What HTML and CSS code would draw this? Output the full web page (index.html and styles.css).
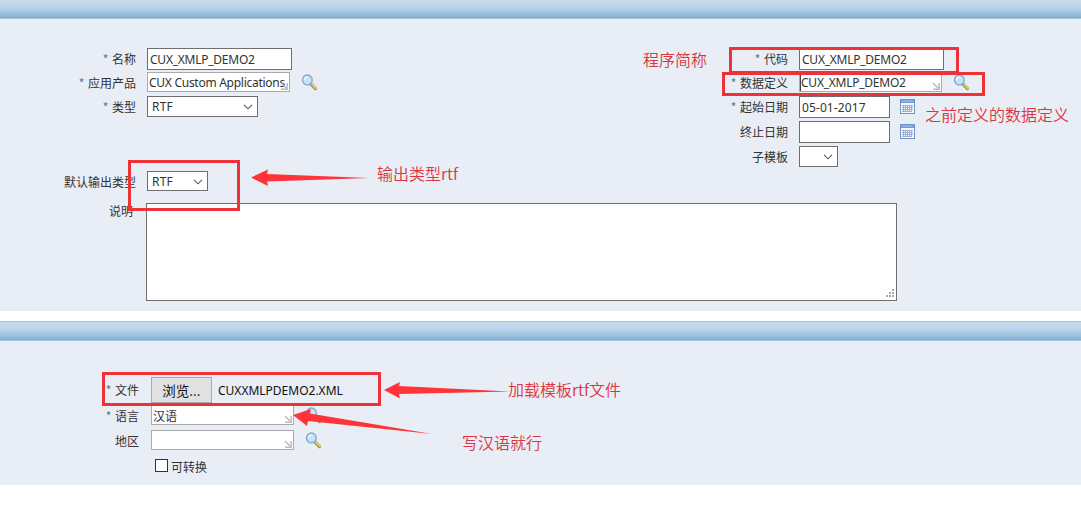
FILE: index.html
```html
<!DOCTYPE html>
<html lang="zh-CN">
<head>
<meta charset="utf-8">
<title>模板</title>
<link rel="stylesheet" href="styles.css">
</head>
<body>
<svg class="defs" width="0" height="0" aria-hidden="true">
  <defs>
    <symbol id="lens" viewBox="0 0 16 16">
      <path d="M9.300 9.300 13.600 13.700" stroke="#a09a50" stroke-width="3.200" stroke-linecap="round"/>
      <path d="M10.300 9.600 14 13.200" stroke="#e0d168" stroke-width="1.700" stroke-linecap="round"/>
      <circle cx="6" cy="5.600" r="4.600" fill="#c3e3fa" stroke="#8aa5cb" stroke-width="1.300"/>
      <path d="M3.400 5.500Q3.700 3 6.200 2.900" fill="none" stroke="#f4fbff" stroke-width="1.300"/>
    </symbol>
    <symbol id="calendar" viewBox="0 0 15 15">
      <rect x=".5" y=".5" width="14" height="14" fill="#f4f8ff" stroke="#6f94cc"/>
      <path d="M1 1h13v3H1z" fill="#6c9be0"/>
      <path d="M2 2h11" stroke="#a9c8f2"/>
      <path d="M2 6.500h11M2 8.500h11M2 10.500h11M2 12.500h9M3.500 6v7M5.500 6v7M7.500 6v7M9.500 6v7M11.500 6v7" stroke="#97a9c4" stroke-width=".9"/>
    </symbol>
    <symbol id="chevron" viewBox="0 0 10 6">
      <path d="M1 .8 5 4.800 9 .8" fill="none" stroke="#585858" stroke-width="1.100"/>
    </symbol>
    <symbol id="corner" viewBox="0 0 8 8">
      <path d="M1 1 6 6M7.200 1v6.200H1" fill="none" stroke="#bcbcbc" stroke-width="1.500"/>
    </symbol>
  </defs>
</svg>

<section class="panel general">
  <header class="bar"></header>
  <div class="columns">
    <div class="column left">
      <div class="row name"><label><i>*</i> 名称</label><div class="box text">CUX_XMLP_DEMO2</div></div>
      <div class="row app"><label><i>*</i> 应用产品</label><div class="box lov"><span class="clip">CUX Custom Applications</span><svg class="corner"><use href="#corner"/></svg></div><svg class="lens"><use href="#lens"/></svg></div>
      <div class="row type"><label><i>*</i> 类型</label><div class="box select wide">RTF<svg class="chevron"><use href="#chevron"/></svg></div></div>
      <div class="row output"><label>默认输出类型</label><div class="box select medium">RTF<svg class="chevron"><use href="#chevron"/></svg></div></div>
    </div>
    <div class="column right">
      <div class="row name"><label><i>*</i> 代码</label><div class="box text">CUX_XMLP_DEMO2</div></div>
      <div class="row app"><label><i>*</i> 数据定义</label><div class="box lov caret">CUX_XMLP_DEMO2<svg class="corner"><use href="#corner"/></svg></div><svg class="lens"><use href="#lens"/></svg></div>
      <div class="row start"><label><i>*</i> 起始日期</label><div class="box date">05-01-2017</div><svg class="calendar"><use href="#calendar"/></svg></div>
      <div class="row end"><label>终止日期</label><div class="box date"></div><svg class="calendar"><use href="#calendar"/></svg></div>
      <div class="row sub"><label>子模板</label><div class="box select small"><svg class="chevron"><use href="#chevron"/></svg></div></div>
    </div>
  </div>
  <div class="row description"><label>说明</label><div class="area"><svg class="grip" viewBox="0 0 10 9"><path d="M8 0h2v2H8zM5 3h2v2H5zM8 3h2v2H8zM2 6h2v2H2zM5 6h2v2H5zM8 6h2v2H8z" fill="#aaa"/></svg></div></div>
</section>

<section class="panel upload">
  <header class="bar"></header>
  <div class="row file"><label><i>*</i> 文件</label><div class="browse">浏览...</div><span class="filename">CUXXMLPDEMO2.XML</span></div>
  <div class="row language"><label><i>*</i> 语言</label><div class="box lov"><span class="cjk">汉语</span><svg class="corner"><use href="#corner"/></svg></div><svg class="lens"><use href="#lens"/></svg></div>
  <div class="row region"><label>地区</label><div class="box lov"><svg class="corner"><use href="#corner"/></svg></div><svg class="lens"><use href="#lens"/></svg></div>
  <div class="row convert"><span class="check"></span><span class="checktext">可转换</span></div>
</section>

<div class="mark mark-code"></div>
<div class="mark mark-data"></div>
<div class="mark mark-output"></div>
<div class="mark mark-file"></div>
<svg class="arrows" width="1081" height="510" viewBox="0 0 1081 510">
  <g fill="#ff3338">
    <path d="M251 177.500 268 169.500 267 174 369 178 267 181.500 268 186Z"/>
    <path d="M384 390 400 382 399 386 510 391.500 399 394 400 398.500Z"/>
    <path d="M293 415 311 409 310 413.500 432 434 308 421 307 426Z"/>
  </g>
</svg>
<div class="note note-code">程序简称</div>
<div class="note note-data">之前定义的数据定义</div>
<div class="note note-output">输出类型rtf</div>
<div class="note note-file">加载模板rtf文件</div>
<div class="note note-language">写汉语就行</div>
</body>
</html>
```

FILE: styles.css
```css
* { box-sizing: border-box; }
body {
  position: relative;
  margin: 0;
  width: 1081px;
  height: 510px;
  overflow: hidden;
  background: #fff;
  color: #333;
  font: 12px/16px "Noto Sans", "Noto Sans CJK SC", sans-serif;
}
.defs { position: absolute; }
svg { display: block; flex: none; }
.panel { background: #e9edf5; overflow: hidden; }
.general { height: 311px; margin-bottom: 10px; border-bottom: 5px solid #e6eff6; }
.upload { height: 164px; }
.bar {
  height: 19px;
  background: linear-gradient(#c7dced, #b6d2e9 45%, #8fb8da 88%, #85a9cb);
  border-bottom: 1px solid #a9c5de;
}
.upload .bar { height: 20px; border-top: 1px solid #a9bfd1; }
.columns { display: flex; height: 184px; }
.column { width: 652px; padding-top: 29px; }
.right { width: 429px; }
.row { display: flex; align-items: flex-start; }
.row label {
  width: 136px;
  margin: 3px 11px 0 0;
  flex: none;
  text-align: right;
  white-space: nowrap;
  font-family: "Noto Sans CJK SC", sans-serif;
}
.row i { color: #5b6f91; font-style: normal; margin-right: 1px; }
.box {
  display: flex;
  position: relative;
  flex: none;
  border: 1px solid #6e6e6e;
  background: #fff;
  white-space: nowrap;
  letter-spacing: -.24px;
}
.name { height: 24px; }
.text { width: 145px; height: 22px; padding: 3px 2px; }
.app { height: 24px; }
.lov { width: 143px; height: 20px; padding: 2px 1px; border-color: #aaa; }
.clip { letter-spacing: -.27px; }
.caret { box-shadow: inset 1px 0 #444; }
.corner { position: absolute; right: 1px; bottom: 1px; width: 8px; height: 8px; }
.lens { width: 17px; height: 17px; margin: 2px 0 0 11px; }
.type { height: 75px; }
.select { height: 21px; padding: 2px 4px; justify-content: space-between; letter-spacing: .2px; }
.wide { width: 111px; }
.medium { width: 61px; height: 20px; }
.small { width: 39px; justify-content: flex-end; }
.chevron { width: 10px; height: 6px; margin-top: 5px; }
.start { height: 25px; }
.date { width: 91px; height: 22px; padding: 3px 2px; letter-spacing: .1px; }
.calendar { width: 15px; height: 15px; margin: 3px 0 0 10px; }
.end { height: 25px; }
.output { height: 20px; }
.sub { height: 21px; }
.description label { width: 133px; margin-right: 13px; margin-top: 0; }
.area {
  display: flex;
  align-items: flex-end;
  justify-content: flex-end;
  width: 751px;
  height: 98px;
  padding: 2px;
  border: 1px solid #6e6e6e;
  background: #fff;
}
.grip { width: 10px; height: 9px; }
.upload .row label { width: 139px; margin-right: 12px; }
.file { margin-top: 36px; height: 28px; }
.upload .file label { margin-top: 5px; }
.browse {
  width: 61px;
  height: 26px;
  flex: none;
  border: 1px solid #aaa;
  background: #e1e1e1;
  color: #111;
  font: 13.500px/25px "Noto Sans CJK SC", sans-serif;
  text-align: center;
}
.filename { margin: 6px 0 0 6px; color: #111; font-size: 12px; }
.language { height: 25px; }
.cjk { font-family: "Noto Sans CJK SC", sans-serif; letter-spacing: 0; }
.region { height: 29px; }
.upload .lens { margin-left: 11px; }
.convert { padding-left: 155px; }
.check { width: 13px; height: 13px; border: 1px solid #333; background: #fff; }
.checktext { margin-left: 3px; font-family: "Noto Sans CJK SC", sans-serif; }

/* Annotations over the form */
.mark { position: absolute; border: 3px solid #ee3338; }
.mark-code { left: 729px; top: 47px; width: 230px; height: 27px; }
.mark-data { left: 722px; top: 72px; width: 263px; height: 24px; }
.mark-output { left: 128px; top: 160px; width: 112px; height: 51px; }
.mark-file { left: 102px; top: 372px; width: 279px; height: 34px; }
.arrows { position: absolute; left: 0; top: 0; }
.note {
  position: absolute;
  color: #dc3540;
  white-space: nowrap;
  font: 350 16px/20px "Noto Sans CJK SC", sans-serif;
}
.note-code { left: 643px; top: 49px; }
.note-data { left: 925px; top: 104px; }
.note-output { left: 377px; top: 163px; }
.note-file { left: 508px; top: 379px; }
.note-language { left: 462px; top: 432px; }
```
